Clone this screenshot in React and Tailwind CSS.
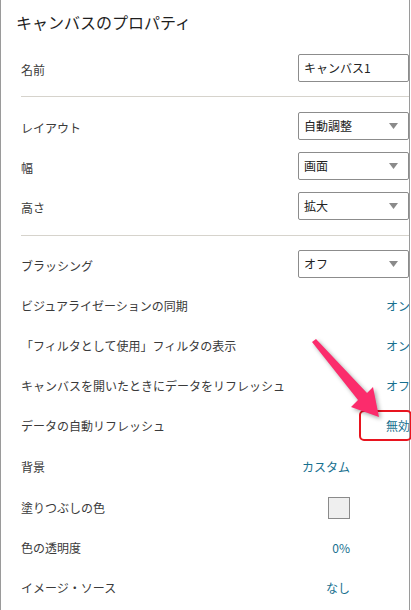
import { useState } from 'react'

const font = { fontFamily: '"Noto Sans CJK JP", "Noto Sans", sans-serif' }

function Select({ value }) {
  return (
    <div className="w-[111px] h-[28px] shrink-0 border border-[#8c8c8c] rounded-[2px] bg-white flex items-center justify-between pl-[5px] pr-[10px]">
      <span className="text-[12px] text-[#222]">{value}</span>
      <svg width="9" height="6" viewBox="0 0 9 6">
        <path d="M0 0 L9 0 L4.5 6 Z" fill="#8a8a8a" />
      </svg>
    </div>
  )
}

function Label({ children }) {
  return <span className="text-[12px] text-[#3a3a3a] mt-[4px] whitespace-nowrap">{children}</span>
}

function Divider() {
  return <div className="ml-[20px] h-px bg-[#d6d3cc]" />
}

function App() {
  const [name] = useState('キャンバス1')

  const toggles = [
    ['ビジュアライゼーションの同期', 'オン'],
    ['「フィルタとして使用」フィルタの表示', 'オン'],
    ['キャンバスを開いたときにデータをリフレッシュ', 'オフ'],
    ['データの自動リフレッシュ', '無効'],
  ]

  return (
    <div className="relative w-[411px] h-[610px] bg-white overflow-hidden" style={font}>
      <div className="w-[410px] h-full border-l border-r border-[#9a9a9a] overflow-hidden">
        {/* Title */}
        <div className="h-[48px] flex items-center pl-[15px] pb-[4px]">
          <h1 className="text-[16px] text-[#1e1e1e]">キャンバスのプロパティ</h1>
        </div>

        <div className="h-[40px] flex items-center justify-between pl-[20px]">
          <Label>名前</Label>
          <div className="w-[111px] h-[28px] border border-[#8c8c8c] rounded-[2px] flex items-center pl-[5px] mt-[-1px]">
            <span className="text-[12px] text-[#222]">{name}</span>
          </div>
        </div>

        <div className="mt-[8px]">
          <Divider />
        </div>

        <div className="mt-[9px]">
          {[['レイアウト', '自動調整'], ['幅', '画面'], ['高さ', '拡大']].map(([label, value]) => (
            <div key={label} className="h-[40px] flex items-center justify-between pl-[20px]">
              <Label>{label}</Label>
              <Select value={value} />
            </div>
          ))}
        </div>

        <div className="mt-[9px]">
          <Divider />
        </div>

        <div className="mt-[8px]">
          <div className="h-[40px] flex items-center justify-between pl-[20px]">
            <Label>ブラッシング</Label>
            <Select value="オフ" />
          </div>

          {toggles.map(([label, value]) => (
            <div key={label} className="h-[40px] flex items-center justify-between pl-[20px]">
              <Label>{label}</Label>
              <span className="w-[23px] overflow-hidden whitespace-nowrap text-[12px] text-[#17708f] mt-[4px]">{value}</span>
            </div>
          ))}

          <div className="h-[41px] flex items-center justify-between pl-[20px] pr-[59px]">
            <Label>背景</Label>
            <span className="text-[12px] text-[#17708f] mt-[4px]">カスタム</span>
          </div>
          <div className="h-[41px] flex items-center justify-between pl-[20px] pr-[59px]">
            <Label>塗りつぶしの色</Label>
            <div className="w-[22px] h-[22px] border border-[#8a8a8a] bg-[#efefef] mt-[4px]" />
          </div>
          <div className="h-[40px] flex items-center justify-between pl-[20px] pr-[59px]">
            <Label>色の透明度</Label>
            <span className="text-[12px] text-[#17708f] mt-[4px]">0%</span>
          </div>
          <div className="h-[40px] flex items-center justify-between pl-[20px] pr-[59px]">
            <Label>イメージ・ソース</Label>
            <span className="text-[12px] text-[#17708f] mt-[4px]">なし</span>
          </div>
        </div>
      </div>

      {/* annotation */}
      <div className="absolute left-[359px] top-[410px] w-[53px] h-[31px] border-2 border-[#e8141f] rounded-[5px]" />
      <svg
        className="absolute left-0 top-0 drop-shadow-[2px_2px_2px_rgba(0,0,0,0.35)]"
        width="411"
        height="610"
        viewBox="0 0 411 610"
      >
        <path
          d="M312 342 L316 339 L367 393 L373 387 L379 417 L351 407 L358 400 Z"
          fill="#fb2c6c"
        />
      </svg>
    </div>
  )
}

export default App
